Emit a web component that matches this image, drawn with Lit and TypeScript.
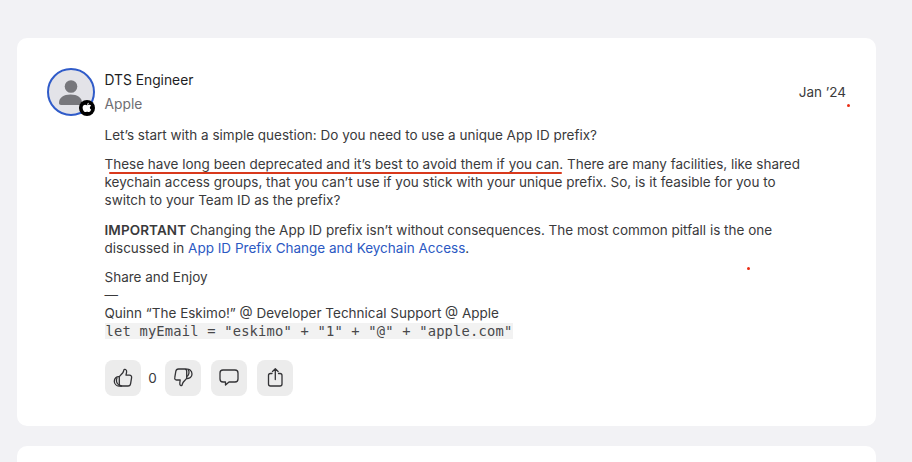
import { LitElement, html, css } from "lit";
import { customElement } from "lit/decorators.js";

@customElement("app-root")
export class AppRoot extends LitElement {
  static styles = css`
    :host {
      display: block;
      position: relative;
      height: 462px;
      overflow: hidden;
      background: #f2f2f5;
      font-family: Inter, "Liberation Sans", sans-serif;
      font-size: 13.5px;
      line-height: 18px;
      color: #3a3a3c;
    }

    .page {
      display: flex;
      flex-direction: column;
      gap: 20px;
      padding: 38px 36px 0 17px;
    }

    .card {
      background: #fff;
      border-radius: 10px;
      padding: 30px;
      height: 328px;
      display: flex;
      gap: 9.5px;
      flex: none;
    }

    .avatar-wrap {
      position: relative;
      width: 48px;
      height: 48px;
      flex: none;
    }

    .avatar {
      width: 48px;
      height: 48px;
      display: block;
    }

    .badge {
      position: absolute;
      right: 0;
      bottom: 0;
      width: 16px;
      height: 16px;
    }

    .main {
      flex: 1;
      min-width: 0;
    }

    .head {
      display: flex;
      justify-content: space-between;
    }

    .who {
      padding-top: 3px;
      font-size: 13.8px;
    }

    .name {
      color: #1d1d1f;
      height: 24px;
    }

    .org {
      color: #6e6e73;
      height: 24px;
    }

    .date {
      margin-top: 15px;
      color: #3a3a3c;
    }

    .body {
      margin-top: 7px;
    }

    p {
      margin: 0 0 11.4px;
    }

    a {
      color: #2b59c3;
      text-decoration: none;
    }

    strong {
      font-weight: 600;
      letter-spacing: 0.1px;
    }

    code {
      font-family: "DejaVu Sans Mono", "Liberation Mono", monospace;
      font-size: 13.77px;
      letter-spacing: 0.19px;
      color: #48484a;
      background: #f2f2f2;
      padding: 0 1px;
    }

    .actions {
      display: flex;
      align-items: center;
      margin-top: 19.4px;
    }

    .btn {
      width: 36px;
      height: 36px;
      border: 0;
      padding: 0;
      border-radius: 8px;
      background: #ececec;
      display: flex;
      align-items: center;
      justify-content: center;
      color: #333336;
    }

    .btn svg {
      width: 20px;
      height: 20px;
      fill: none;
      stroke: currentColor;
      stroke-width: 1.3;
      stroke-linejoin: round;
      stroke-linecap: round;
    }

    .count {
      width: 24px;
      text-align: center;
      color: #3a3a3c;
    }

    .gap {
      margin-left: 10px;
    }

    .mark {
      position: relative;
    }

    .mark::after {
      content: "";
      position: absolute;
      left: 4px;
      right: 1px;
      bottom: -2px;
      height: 2.5px;
      background: #d9391c;
      border-radius: 1px;
    }

    .dot {
      position: absolute;
      width: 3px;
      height: 3px;
      border-radius: 50%;
      background: #ea2c14;
    }
  `;

  render() {
    return html`
      <div class="page">
        <article class="card">
          <div class="avatar-wrap">
            <svg class="avatar" viewBox="0 0 48 48">
              <circle cx="24" cy="24" r="23" fill="#e3e3e8" stroke="#2f5bc9" stroke-width="2" />
              <circle cx="24" cy="18.500" r="6.300" fill="#77777c" />
              <path d="M12 35c0-5.500 4.500-8.500 11.500-8.500S35 29.500 35 35c0 1.200-.8 2-2 2H14c-1.200 0-2-.8-2-2z" fill="#77777c" />
            </svg>
            <svg class="badge" viewBox="0 0 16 16">
              <circle cx="8" cy="8" r="8" fill="#000" />
              <path
                d="M8 5.300c.8-.5 1.700-.7 2.500-.5.700.1 1.300.5 1.600 1-.9.500-1.300 1.300-1.200 2.100.1.800.6 1.400 1.300 1.700-.4 1.100-1.200 2.500-2.200 2.500-.6 0-1-.4-1.900-.4s-1.300.4-1.900.4c-1.100 0-2.600-2.300-2.600-4.400 0-1.800 1.200-2.900 2.500-2.900.7 0 1.300.3 1.900.5z"
                fill="#fff"
              />
              <path d="M8 4.800c0-1 .7-1.900 1.800-2.100.1 1.100-.7 2.100-1.800 2.100z" fill="#fff" />
            </svg>
          </div>
          <div class="main">
            <div class="head">
              <div class="who">
                <div class="name">DTS Engineer</div>
                <div class="org">Apple</div>
              </div>
              <div class="date">Jan ’24</div>
            </div>
            <div class="body">
              <p>Let’s start with a simple question: Do you need to use a unique App ID prefix?</p>
              <p>
                <span class="mark">These have long been deprecated and it’s best to avoid them if you can.</span>
                There are many facilities, like shared<br />keychain access groups, that you can’t use if you stick
                with your unique prefix. So, is it feasible for you to<br />switch to your Team ID as the prefix?
              </p>
              <p>
                <strong>IMPORTANT</strong> Changing the App ID prefix isn’t without consequences. The most common
                pitfall is the one<br />discussed in <a href="#">App ID Prefix Change and Keychain Access</a>.
              </p>
              <p>
                Share and Enjoy<br />—<br />Quinn “The Eskimo!” @ Developer Technical Support @ Apple<br /><code
                  >let myEmail = "eskimo" + "1" + "@" + "apple.com"</code
                >
              </p>
            </div>
            <div class="actions">
              <button class="btn">
                <svg viewBox="0 0 20 20">
                  <path d="M6.300 8.600L9.600 5c.8-1 1-2.200 1.400-3.200.4-1 3-.6 2.600 2.200L13 7.200h3.500c1.500 0 2.300 1 2.100 2.400l-1 6c-.2 1.400-1.200 2.400-2.600 2.400H8.500c-1.300 0-2.200-1-2.200-2.200z" />
                  <path d="M6.300 8.600c-2.800-.4-5 1.900-5 4.600 0 2.800 2.200 4.800 4.700 4.800h2.500" />
                  <path d="M4 10c-1 2-.8 5.800 2.300 7" />
                </svg>
              </button>
              <span class="count">0</span>
              <button class="btn">
                <svg viewBox="0 0 20 20">
                  <path d="M13.700 10.400L10.400 14c-.8 1-1 2.200-1.400 3.200-.4 1-2.500.6-2.200-2.200l.4-3H3.500c-1.500 0-2-1.200-1.700-2.600l1-6C3 2 4 1 5.500 1H12c1 0 1.700 1 1.700 2.200z" />
                  <path d="M13 1.200c3-.6 6 1.300 6 4.800 0 3-2.500 5-5.300 4.400" />
                  <path d="M15.500 2c1 2 .5 5.500-1.800 6.500" />
                </svg>
              </button>
              <button class="btn gap">
                <svg viewBox="0 0 20 20">
                  <path d="M4 2h12c1.700 0 3 1.300 3 3v6c0 1.700-1.300 3-3 3h-6l-3.500 3v-3H4c-1.700 0-3-1.300-3-3V5c0-1.700 1.300-3 3-3z" />
                </svg>
              </button>
              <button class="btn gap">
                <svg viewBox="0 0 20 20">
                  <path d="M7 5.500H5.500c-1.200 0-2 .8-2 2V16c0 1.200.8 2 2 2H15c1.200 0 2-.8 2-2V7.500c0-1.200-.8-2-2-2h-1.500" />
                  <path d="M10.300 11.500V.8M7.500 3.500L10.300.8l2.800 2.700" />
                </svg>
              </button>
            </div>
          </div>
        </article>
        <article class="card"></article>
      </div>
      <span class="dot" style="left:847px;top:104px"></span>
      <span class="dot" style="left:747px;top:267px"></span>
    `;
  }
}
